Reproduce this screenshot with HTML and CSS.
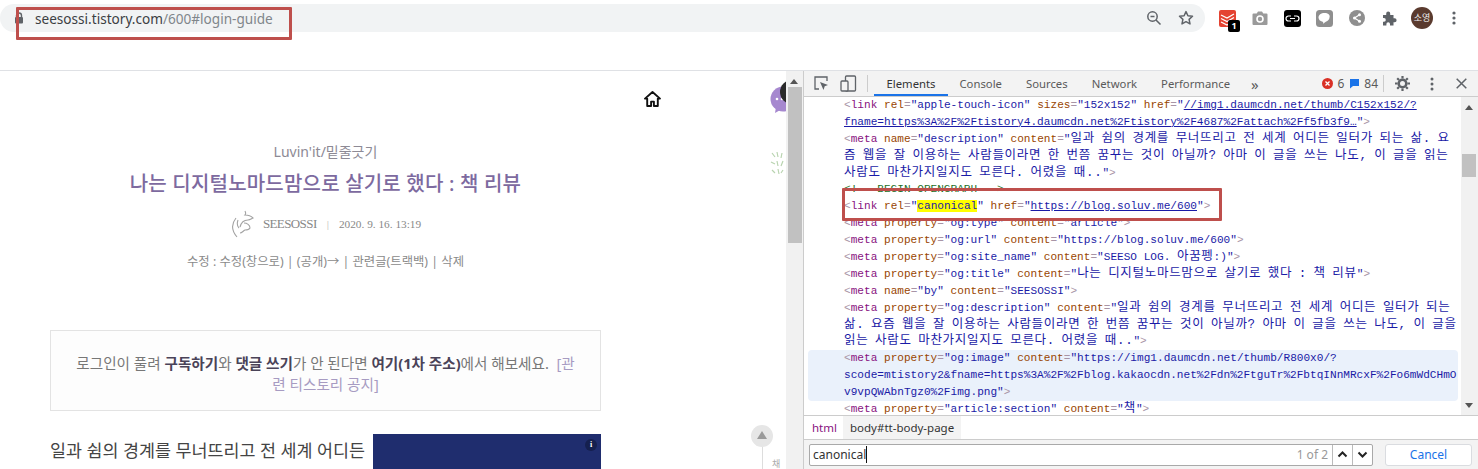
FILE: index.html
```html
<!DOCTYPE html>
<html lang="ko">
<head>
  <meta charset="UTF-8" />
  <title>나는 디지털노마드맘으로 살기로 했다 : 책 리뷰</title>
  <link rel="stylesheet" href="styles.css">
</head>
<body>
  <header class="toolbar">
    <div class="omnibox">
      <svg class="lock" width="10" height="12" viewBox="0 0 10 12"><path d="M2.5 5V3.5a2.5 2.5 0 0 1 5 0V5" fill="none" stroke="#5f6368" stroke-width="1.4"/><rect x="1" y="5" width="8" height="6.5" rx="1" fill="#5f6368"/></svg>
      <span class="url"><span class="host">seesossi.tistory.com</span>/600#login-guide</span>
      <svg class="omni-icon" width="16" height="16" viewBox="0 0 16 16"><circle cx="6.5" cy="6.5" r="4.7" fill="none" stroke="#5f6368" stroke-width="1.5"/><path d="M10 10l4.5 4.5M4.5 6.5h4" stroke="#5f6368" stroke-width="1.5"/></svg>
      <svg class="omni-icon" width="16" height="16" viewBox="0 0 16 16"><path d="M8 1.6l1.9 4.2 4.6.5-3.4 3.1.9 4.5L8 11.7l-4 2.2.9-4.5L1.5 6.3l4.6-.5z" fill="none" stroke="#5f6368" stroke-width="1.5" stroke-linejoin="round"/></svg>
    </div>
    <div class="extensions">
      <div class="ext">
        <svg width="17" height="17" viewBox="0 0 17 17"><rect width="17" height="17" rx="2" fill="#e44332"/><path d="M2 5l6 3 7-4M2 8.5l6 3 7-4M2 12l6 3 7-4" fill="none" stroke="#fff" stroke-width="1.2"/></svg>
        <span class="ext-badge">1</span>
      </div>
      <div class="ext">
        <svg width="16" height="14" viewBox="0 0 16 14"><path d="M1.5 2.5h3.2L6 .6h4l1.3 1.9h3.2a1 1 0 0 1 1 1V13a1 1 0 0 1-1 1h-13a1 1 0 0 1-1-1V3.5a1 1 0 0 1 1-1z" fill="#9a9a9a"/><circle cx="8" cy="8" r="3" fill="none" stroke="#fff" stroke-width="1.6"/></svg>
      </div>
      <div class="ext">
        <svg width="17" height="17" viewBox="0 0 17 17"><rect width="17" height="17" rx="3" fill="#000"/><path d="M7 6H4.5a2.5 2.5 0 0 0 0 5H7M10 6h2.500a2.500 2.500 0 0 1 0 5H10M6 8.500h5" fill="none" stroke="#fff" stroke-width="1.2"/></svg>
      </div>
      <div class="ext">
        <svg width="17" height="17" viewBox="0 0 17 17"><rect width="17" height="17" rx="3.5" fill="#8f8f8f"/><path d="M8.5 3C5 3 2.500 5 2.500 7.600c0 2.300 2 4 4.700 4.300l-.2 1.800 2.800-1.900c2.200-.6 3.700-2.300 3.700-4.200C14.500 5 12 3 8.500 3z" fill="#fff"/></svg>
      </div>
      <div class="ext">
        <svg width="16" height="16" viewBox="0 0 16 16"><circle cx="8" cy="8" r="8" fill="#8f8f8f"/><path d="M10.5 4.800L5.500 8l5 3.200" fill="none" stroke="#fff" stroke-width="1.2"/><circle cx="10.5" cy="4.8" r="1.5" fill="#fff"/><circle cx="5.5" cy="8" r="1.5" fill="#fff"/><circle cx="10.5" cy="11.2" r="1.5" fill="#fff"/></svg>
      </div>
      <div class="ext">
        <svg width="16" height="16" viewBox="0 0 16 16"><path d="M1 5h3.200V3.600a2 2 0 0 1 4 0V5h3.300v3.200h1.100a2 2 0 0 1 0 4h-1.100v3.300H8V14a1.800 1.800 0 0 0-3.600 0v1.500H1v-3.800h1a1.800 1.800 0 0 0 0-3.600H1z" fill="#5f6368"/></svg>
      </div>
      <div class="avatar">소영</div>
      <div class="ext">
        <svg width="4" height="14" viewBox="0 0 4 14"><circle cx="2" cy="2" r="1.6" fill="#5f6368"/><circle cx="2" cy="7" r="1.6" fill="#5f6368"/><circle cx="2" cy="12" r="1.6" fill="#5f6368"/></svg>
      </div>
    </div>
  </header>

  <main class="main">
    <section class="page">
      <div class="page-head">
        <svg width="17" height="16" viewBox="0 0 17 16"><path d="M8.5 1L1 7.600h2.200V15h3.900v-4.400h2.800V15h3.900V7.600H16z" fill="none" stroke="#111" stroke-width="1.9" stroke-linejoin="round"/></svg>
      </div>
      <div class="article">
        <p class="category">Luvin'it/밑줄긋기</p>
        <h1 class="title">나는 디지털노마드맘으로 살기로 했다 : 책 리뷰</h1>
        <div class="byline">
          <svg width="25" height="28" viewBox="0 0 25 28"><path d="M15 1c1 2 1 3 0 4 3 0 6 1 8 3-2 1-3 2-5 2-4 0-7 3-8 7M6 8C2 13 1 20 7 27M14 13c3 0 6 2 6 5-1 2-3 2-5 2-2 1-3 3-5 3M8 10c-1 3-1 6 1 8" fill="none" stroke="#a3a3a3" stroke-width="1.1"/></svg>
          <span class="author">SEESOSSI</span>
          <span class="sep">|</span>
          <span class="date">2020. 9. 16. 13:19</span>
        </div>
        <p class="admin">수정 : 수정(창으로) | (공개)→ | 관련글(트랙백) | 삭제</p>
        <div class="notice">
          로그인이 풀려 <b>구독하기</b>와 <b>댓글 쓰기</b>가 안 된다면 <b>여기(1차 주소)</b>에서 해보세요. &nbsp;<a>[관련 티스토리 공지]</a>
        </div>
        <div class="body-row">
          <p class="lead">일과 쉼의 경계를 무너뜨리고 전 세계 어디든</p>
          <div class="ad"><span class="ad-info">i</span></div>
        </div>
      </div>

      <svg class="chat-bubble" width="18" height="34" viewBox="0 0 18 34"><circle cx="13" cy="19" r="12.5" fill="#a688cf"/><path d="M6 27l-1 6 7-4z" fill="#a688cf"/><circle cx="7" cy="19" r="1.3" fill="#fff"/><circle cx="12" cy="19" r="1.3" fill="#fff"/><circle cx="22" cy="12" r="12" fill="#2a2a2a"/></svg>
      <svg class="sticker" width="18" height="28" viewBox="0 0 18 28"><path d="M3 3l3 4M8 2l1 5M13 3l-1 5M2 12l4 2M8 11l1 5M14 11l-2 5M3 20l3 3M9 19l1 5M14 20l-2 3" stroke="#b9d4b0" stroke-width="1.2" fill="none"/></svg>
      <div class="to-top"><span class="to-top-arrow"></span></div>
      <span class="to-top-line"></span>
      <span class="to-top-label">채</span>
    </section>

    <div class="page-scroll">
      <span class="arrow-up"></span>
      <div class="page-thumb"></div>
    </div>

    <section class="devtools">
      <div class="tabs">
        <svg class="tool" width="17" height="17" viewBox="0 0 17 17"><path d="M6 14H2V2h12v4" fill="none" stroke="#5f6368" stroke-width="1.3"/><path d="M7 7l8 3-3.300 1.300L10.500 15z" fill="#5f6368"/></svg>
        <svg class="tool" width="17" height="17" viewBox="0 0 17 17"><rect x="5.5" y="1" width="10" height="15" rx="1" fill="none" stroke="#5f6368" stroke-width="1.3"/><rect x="1" y="6" width="7" height="10" rx="1" fill="#f3f3f3" stroke="#5f6368" stroke-width="1.3"/></svg>
        <span class="tab-sep"></span>
        <span class="tab active">Elements</span>
        <span class="tab">Console</span>
        <span class="tab">Sources</span>
        <span class="tab">Network</span>
        <span class="tab">Performance</span>
        <span class="tab more">»</span>
        <div class="tab-status">
          <svg width="11" height="11" viewBox="0 0 11 11"><circle cx="5.5" cy="5.5" r="5.5" fill="#d93025"/><path d="M3.500 3.500l4 4M7.500 3.500l-4 4" stroke="#fff" stroke-width="1.3"/></svg>
          <span class="count">6</span>
          <svg width="11" height="11" viewBox="0 0 11 11"><path d="M1 1h9v7H4l-3 2.500z" fill="#1a73e8"/></svg>
          <span class="count">84</span>
          <span class="tab-sep"></span>
          <svg class="gear" width="15" height="15" viewBox="0 0 15 15"><circle cx="7.5" cy="7.5" r="3.8" fill="none" stroke="#5f6368" stroke-width="2.6"/><path d="M7.500 0v15M0 7.500h15M2.200 2.200l10.600 10.600M12.800 2.200L2.200 12.800" stroke="#5f6368" stroke-width="2.2" stroke-dasharray="2.6 9.8"/></svg>
          <svg class="kebab" width="4" height="14" viewBox="0 0 4 14"><circle cx="2" cy="2" r="1.5" fill="#5f6368"/><circle cx="2" cy="7" r="1.5" fill="#5f6368"/><circle cx="2" cy="12" r="1.5" fill="#5f6368"/></svg>
          <svg class="close" width="11" height="11" viewBox="0 0 11 11"><path d="M.7.700l9.600 9.600M10.300.700L.7 10.300" stroke="#5f6368" stroke-width="1.5"/></svg>
        </div>
      </div>

      <div class="dom">
        <div class="dom-lines">
          <div class="ln"><i>&lt;</i><u>link</u> <s>rel</s><i>=</i><em>"apple-touch-icon"</em> <s>sizes</s><i>=</i><em>"152x152"</em> <s>href</s><i>=</i><em>"</em><a>//img1.daumcdn.net/thumb/C152x152/?</a></div>
          <div class="ln"><a>fname=https%3A%2F%2Ftistory4.daumcdn.net%2Ftistory%2F4687%2Fattach%2Ff5fb3f9…</a><em>"</em><i>&gt;</i></div>
          <div class="ln"><i>&lt;</i><u>meta</u> <s>name</s><i>=</i><em>"description"</em> <s>content</s><i>=</i><em>"<span class="ko">일과 쉼의 경계를 무너뜨리고 전 세계 어디든 일터가 되는 삶. 요</span></em></div>
          <div class="ln"><em class="ko">즘 웹을 잘 이용하는 사람들이라면 한 번쯤 꿈꾸는 것이 아닐까? 아마 이 글을 쓰는 나도, 이 글을 읽는</em></div>
          <div class="ln"><em class="ko">사람도 마찬가지일지도 모른다. 어렸을 때..</em><em>"</em><i>&gt;</i></div>
          <div class="ln"><b>&lt;!-- BEGIN OPENGRAPH --&gt;</b></div>
          <div class="ln"><i>&lt;</i><u>link</u> <s>rel</s><i>=</i><em>"<mark>canonical</mark>"</em> <s>href</s><i>=</i><em>"</em><a>https://blog.soluv.me/600</a><em>"</em><i>&gt;</i></div>
          <div class="ln"><i>&lt;</i><u>meta</u> <s>property</s><i>=</i><em>"og:type"</em> <s>content</s><i>=</i><em>"article"</em><i>&gt;</i></div>
          <div class="ln"><i>&lt;</i><u>meta</u> <s>property</s><i>=</i><em>"og:url"</em> <s>content</s><i>=</i><em>"https://blog.soluv.me/600"</em><i>&gt;</i></div>
          <div class="ln"><i>&lt;</i><u>meta</u> <s>property</s><i>=</i><em>"og:site_name"</em> <s>content</s><i>=</i><em>"SEESO LOG. <span class="ko">아꿈펭</span>:)"</em><i>&gt;</i></div>
          <div class="ln"><i>&lt;</i><u>meta</u> <s>property</s><i>=</i><em>"og:title"</em> <s>content</s><i>=</i><em>"<span class="ko">나는 디지털노마드맘으로 살기로 했다 : 책 리뷰</span>"</em><i>&gt;</i></div>
          <div class="ln"><i>&lt;</i><u>meta</u> <s>name</s><i>=</i><em>"by"</em> <s>content</s><i>=</i><em>"SEESOSSI"</em><i>&gt;</i></div>
          <div class="ln"><i>&lt;</i><u>meta</u> <s>property</s><i>=</i><em>"og:description"</em> <s>content</s><i>=</i><em>"<span class="ko">일과 쉼의 경계를 무너뜨리고 전 세계 어디든 일터가 되는</span></em></div>
          <div class="ln"><em class="ko">삶. 요즘 웹을 잘 이용하는 사람들이라면 한 번쯤 꿈꾸는 것이 아닐까? 아마 이 글을 쓰는 나도, 이 글을</em></div>
          <div class="ln"><em class="ko">읽는 사람도 마찬가지일지도 모른다. 어렸을 때..</em><em>"</em><i>&gt;</i></div>
          <div class="selected">
            <div class="ln"><i>&lt;</i><u>meta</u> <s>property</s><i>=</i><em>"og:image"</em> <s>content</s><i>=</i><em>"https://img1.daumcdn.net/thumb/R800x0/?</em></div>
            <div class="ln"><em>scode=mtistory2&amp;fname=https%3A%2F%2Fblog.kakaocdn.net%2Fdn%2FtguTr%2FbtqINnMRcxF%2Fo6mWdCHmO</em></div>
            <div class="ln"><em>v9vpQWAbnTgz0%2Fimg.png"</em><i>&gt;</i></div>
          </div>
          <div class="ln"><i>&lt;</i><u>meta</u> <s>property</s><i>=</i><em>"article:section"</em> <s>content</s><i>=</i><em>"<span class="ko">책</span>"</em><i>&gt;</i></div>
        </div>
        <div class="dom-scroll">
          <span class="arrow-up"></span>
          <div class="dom-thumb"></div>
          <span class="arrow-down"></span>
        </div>
      </div>

      <div class="crumbs">
        <span class="crumb html">html</span>
        <span class="crumb current">body#tt-body-page</span>
      </div>

      <div class="search">
        <div class="search-input">
          <span class="query"><span class="caret">canonical</span></span>
          <span class="matches">1 of 2</span>
          <span class="step"><svg width="11" height="7" viewBox="0 0 11 7"><path d="M1.500 5.500l4-4 4 4" fill="none" stroke="#222" stroke-width="2"/></svg></span>
          <span class="step"><svg width="11" height="7" viewBox="0 0 11 7"><path d="M1.500 1.500l4 4 4-4" fill="none" stroke="#222" stroke-width="2"/></svg></span>
        </div>
        <span class="cancel">Cancel</span>
      </div>
    </section>
  </main>

  <div class="callout callout-url"></div>
  <div class="callout callout-line"></div>
</body>
</html>
```

FILE: styles.css
```css
* {
  margin: 0;
  padding: 0;
  box-sizing: border-box;
}
html, body {
  width: 1478px;
  height: 469px;
  overflow: hidden;
  background: #fff;
}
body {
  font-family: "Noto Sans", "Noto Sans CJK KR", sans-serif;
  position: relative;
}

/* browser toolbar */
.toolbar {
  height: 71px;
  border-bottom: 1px solid #dfe1e5;
  display: flex;
  align-items: flex-start;
  padding-top: 4px;
}
.omnibox {
  width: 1205px;
  height: 28px;
  background: #f1f3f4;
  border-radius: 14px;
  display: flex;
  align-items: center;
  padding-left: 14px;
  padding-right: 11px;
  gap: 16px;
}
.lock {
  flex: none;
  margin-right: -5px;
}
.url {
  flex: 1;
  font-size: 13.6px;
  color: #80868b;
}
.host {
  color: #3c4043;
}
.extensions {
  display: flex;
  align-items: center;
  height: 28px;
  padding-left: 6px;
}
.ext {
  width: 32.5px;
  height: 28px;
  display: flex;
  align-items: center;
  justify-content: center;
  position: relative;
}
.ext-badge {
  position: absolute;
  left: 17px;
  top: 16px;
  width: 12px;
  height: 12px;
  background: #000;
  color: #fff;
  font-size: 9px;
  font-weight: 700;
  line-height: 12px;
  text-align: center;
  border-radius: 2px;
}
.avatar {
  width: 22px;
  height: 22px;
  margin: 0 5px;
  background: #5a3a2e;
  color: #eee;
  border-radius: 50%;
  font-size: 9px;
  line-height: 22px;
  text-align: center;
}

.main {
  display: flex;
  height: 398px;
}

/* blog page */
.page {
  width: 786px;
  flex: none;
  position: relative;
  overflow: hidden;
}
.page-head {
  display: flex;
  justify-content: flex-end;
  padding: 20px 125px 0 0;
  height: 71px;
}
.article {
  width: 551px;
  margin-left: 50px;
  text-align: center;
}
.category {
  font-size: 14px;
  line-height: 20px;
  color: #8d8a95;
}
.title {
  font-size: 20px;
  font-weight: 500;
  line-height: 30px;
  color: #7d6a9f;
  margin-top: 7px;
  letter-spacing: 0.2px;
}
.byline {
  display: flex;
  justify-content: center;
  align-items: center;
  gap: 8px;
  height: 30px;
  margin-top: 10px;
  font-family: "Liberation Serif", serif;
  color: #888;
  font-size: 11.3px;
}
.author {
  font-size: 13px;
  letter-spacing: -0.6px;
}
.sep {
  color: #bbb;
  margin: 0 2px;
}
.admin {
  font-size: 12.35px;
  line-height: 18px;
  color: #8a8a8a;
  margin-top: 14px;
}
.notice {
  height: 81px;
  margin-top: 59px;
  padding: 22px 24px 0;
  background: #fdfdfd;
  border: 1px solid #e3e3e3;
  font-size: 14.6px;
  line-height: 21px;
  color: #777;
  word-break: break-all;
}
.notice b {
  color: #4a4358;
  font-weight: 700;
}
.notice a {
  color: #a79bc2;
}
.body-row {
  display: flex;
  justify-content: space-between;
  margin-top: 23px;
}
.lead {
  font-size: 17.4px;
  line-height: 32px;
  color: #444;
  white-space: nowrap;
}
.ad {
  width: 228px;
  height: 35px;
  background: #1f2d6e;
  position: relative;
}
.ad-info {
  position: absolute;
  top: 5px;
  right: 4px;
  width: 12px;
  height: 12px;
  border-radius: 50%;
  background: #15204f;
  color: #fff;
  font: 700 8px/12px "Liberation Serif", serif;
  text-align: center;
}
.chat-bubble {
  position: absolute;
  left: 770px;
  top: 9px;
}
.sticker {
  position: absolute;
  left: 769px;
  top: 79px;
}
.to-top {
  position: absolute;
  left: 751px;
  top: 354px;
  width: 22px;
  height: 22px;
  border-radius: 50%;
  background: #e6e6e6;
}
.to-top-arrow {
  position: absolute;
  left: 6px;
  top: 6px;
  border-left: 5px solid transparent;
  border-right: 5px solid transparent;
  border-bottom: 8px solid #9a9a9a;
}
.to-top-line {
  position: absolute;
  left: 762px;
  top: 376px;
  width: 1px;
  height: 22px;
  background: #ddd;
}
.to-top-label {
  position: absolute;
  left: 772px;
  top: 388px;
  font-size: 9px;
  line-height: 9px;
  color: #aaa;
}
.page-scroll {
  width: 17px;
  flex: none;
  background: #f1f1f1;
  position: relative;
}
.arrow-up {
  position: absolute;
  left: 4px;
  top: 8px;
  border-left: 4px solid transparent;
  border-right: 4px solid transparent;
  border-bottom: 5px solid #555;
}
.arrow-down {
  position: absolute;
  left: 4px;
  bottom: 7px;
  border-left: 4px solid transparent;
  border-right: 4px solid transparent;
  border-top: 5px solid #555;
}
.page-thumb {
  margin: 16px 1px 0 2px;
  height: 156px;
  background: #c1c1c1;
}

/* devtools */
.devtools {
  flex: 1;
  min-width: 0;
  border-left: 1px solid #ccc;
  display: flex;
  flex-direction: column;
}
.tabs {
  height: 26px;
  flex: none;
  background: #f3f3f3;
  border-bottom: 1px solid #ccc;
  display: flex;
  align-items: center;
  padding-left: 9px;
  font-size: 11.3px;
  color: #5a5a5a;
}
.tool {
  margin-right: 10px;
}
.tab-sep {
  width: 1px;
  height: 17px;
  background: #ccc;
}
.tab {
  padding: 0 12.5px;
  height: 25px;
  line-height: 26px;
  margin-right: -1px;
}
.tab.active {
  color: #333;
  border-bottom: 2px solid #1a73e8;
  margin-left: 6px;
}
.tab.more {
  font-size: 15px;
  margin-left: -3px;
}
.tab-status {
  margin-left: auto;
  display: flex;
  align-items: center;
  padding-right: 11px;
  font-size: 12px;
}
.count {
  margin: 0 5px 0 4px;
}
.gear {
  margin-left: 11px;
}
.kebab {
  margin-left: 20px;
}
.close {
  margin-left: 22px;
}
.dom {
  height: 319px;
  flex: none;
  display: flex;
  border-bottom: 1px solid #ccc;
}
.dom-lines {
  flex: 1;
  min-width: 0;
  overflow: hidden;
  padding: 0 3px 0 4px;
  font-family: "Liberation Mono", "Noto Sans CJK KR", monospace;
  font-size: 11.1px;
  line-height: 16.9px;
  white-space: nowrap;
}
.ln {
  height: 16.9px;
  padding-left: 36px;
}
.ln i, .ln em, .ln s, .ln u, .ln b {
  font-style: normal;
  font-weight: 400;
  text-decoration: none;
}
.ln i { color: #a894a6; }
.ln u { color: #881280; }
.ln s { color: #994500; }
.ln em { color: #1a1aa6; }
.ln a { color: #1a1aa6; text-decoration: underline; }
.ln b { color: #236e25; }
.ln .ko {
  font-size: 12.5px;
  letter-spacing: 0.7px;
  word-spacing: -1.6px;
}
.ln mark {
  background: #ffff00;
  color: #1a1aa6;
}
.selected {
  background: #eaf1fb;
  border-radius: 4px;
  overflow: hidden;
}
.dom-scroll {
  width: 17px;
  flex: none;
  background: #f1f1f1;
  position: relative;
}
.dom-thumb {
  margin: 57px 2px 0 1px;
  height: 23px;
  background: #c1c1c1;
}
.crumbs {
  height: 24px;
  flex: none;
  display: flex;
  align-items: stretch;
  padding-left: 3px;
  font-size: 11.5px;
  line-height: 24px;
  border-bottom: 1px solid #ccc;
}
.crumb {
  padding: 0 5px;
  color: #333;
}
.crumb.html {
  color: #881280;
  margin-right: 1px;
}
.crumb.current {
  background: #f3f3f3;
  padding: 0 7px;
}
.search {
  flex: 1;
  background: #f3f3f3;
  display: flex;
  align-items: center;
  padding: 0 6px 0 5px;
  gap: 12px;
}
.search-input {
  width: 564px;
  height: 22px;
  background: #fff;
  border: 1px solid #a9a9a9;
  border-radius: 2px;
  display: flex;
  align-items: center;
  font-size: 12px;
}
.query {
  flex: 1;
  padding-left: 3px;
  color: #333;
}
.caret {
  border-right: 1px solid #111;
}
.matches {
  color: #999;
  padding-right: 4px;
}
.step {
  width: 20px;
  height: 20px;
  border-left: 1px solid #bbb;
  display: flex;
  align-items: center;
  justify-content: center;
}
.cancel {
  flex: 1;
  height: 22px;
  background: #fff;
  border: 1px solid #dadce0;
  border-radius: 3px;
  color: #1a73e8;
  font-size: 12px;
  line-height: 20px;
  text-align: center;
}

/* red annotation boxes drawn over the capture */
.callout {
  position: absolute;
  border: 3px solid #be4f4c;
  border-radius: 1px;
  pointer-events: none;
}
.callout-url {
  left: 16px;
  top: 7px;
  width: 276px;
  height: 33px;
}
.callout-line {
  left: 842px;
  top: 188px;
  width: 380px;
  height: 33px;
}
```
